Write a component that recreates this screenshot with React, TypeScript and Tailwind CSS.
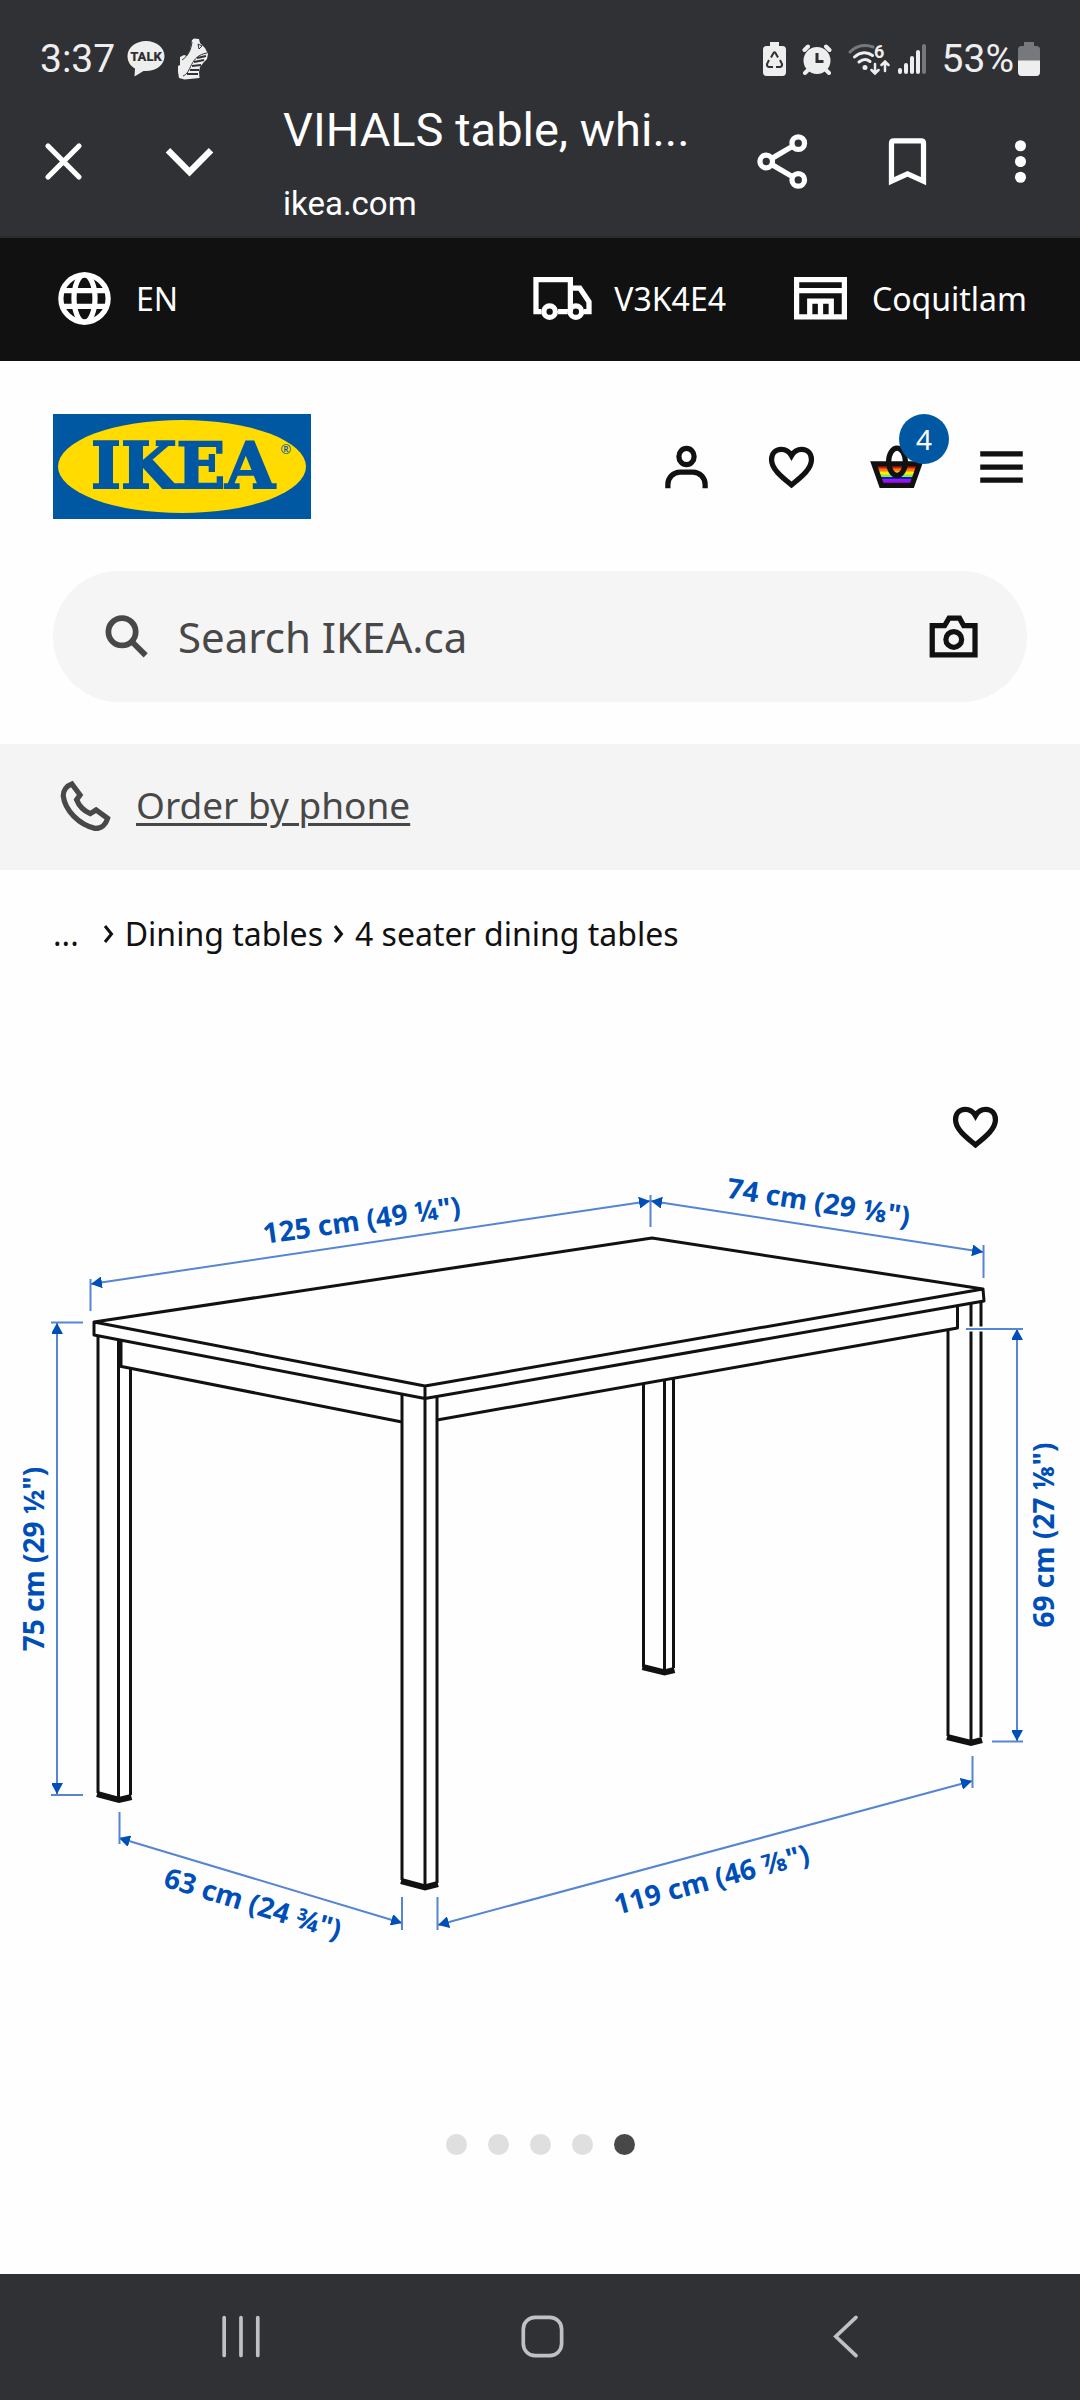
import React, { useState } from 'react';

type IconProps = {
  children: React.ReactNode;
  className?: string;
  strokeWidth?: number;
};

const Icon = ({ children, className = '', strokeWidth = 2 }: IconProps) => (
  <svg
    viewBox="0 0 24 24"
    fill="none"
    stroke="currentColor"
    strokeWidth={strokeWidth}
    className={`size-[63px] shrink-0 ${className}`}
    aria-hidden="true"
  >
    {children}
  </svg>
);

const HeartIcon = () => (
  <Icon>
    <path d="M12 19C9 16.5 4.4 13.2 4.4 9.4 4.4 7 6 5.5 8.1 5.5c1.7 0 3 .8 3.9 2.4.9-1.6 2.2-2.4 3.9-2.4 2.1 0 3.7 1.5 3.7 3.9C19.6 13.2 15 16.5 12 19Z" />
  </Icon>
);

const StatusBar = () => (
  <div className="flex items-center justify-between h-[54px] mt-8 px-10 text-[39px] text-[#eeeeee]">
    <div className="flex items-center gap-3">
      <span>3:37</span>
      <svg viewBox="0 0 38 38" className="size-[38px]" aria-hidden="true">
        <path
          fill="#eeeeee"
          d="M19 1C9 1 .5 7.500.5 16c0 5.500 3 10 7.500 12.500L7.500 36.500l9-5.500c11 1 21-5 21-15C37.500 7.500 29 1 19 1Z"
        />
        <text x="19" y="21" textAnchor="middle" fontSize="13" fontWeight="900" fill="#303135">
          TALK
        </text>
      </svg>
      <svg viewBox="0 0 32 42" className="h-[42px] w-8" aria-hidden="true">
        <path
          fill="#eeeeee"
          d="M15 2l2-1.500 5 .5 1 4 5 5 3 6-1 5-3 3-4 5-1 5 .5 6-15 1.500L2 40l-1-6V28l2-1V19l4-2 3 1 3-6Z"
        />
        <g fill="none" stroke="#303135" strokeWidth="1">
          <path d="M6 38c9-3 6-20 24-23M15 4c-1 8-4 14-10 18M21 6l4 2-3 3Z" />
          <path strokeWidth="2" d="M20 20l9-2M17 24l10-2M15 28l9-1M13 32l9 0M10 36l11 0" />
        </g>
      </svg>
    </div>
    <div className="flex items-center">
      <svg viewBox="0 0 23 34" className="h-[34px] w-[23px]" aria-hidden="true">
        <path fill="#eeeeee" d="M7 0h9v4h3.500q3.500 0 3.500 3.500V30q0 4-3.500 4h-16Q0 34 0 30V7.500Q0 4 3.500 4H7Z" />
        <g fill="none" stroke="#303135" strokeWidth="2">
          <path d="M8 15.500l2.500-4.500q1-1.500 2 0l2.500 4.500M17 18l2 4q.5 2.500-2 3h-4M10 25H6q-2.500-.5-2-3l2-4" />
        </g>
      </svg>
      <svg viewBox="0 0 30 31" className="ml-4 h-[31px] w-[30px]" aria-hidden="true">
        <g stroke="#eeeeee" strokeWidth="4" strokeLinecap="round">
          <path d="M2.500 6l3.500-3.500M27.500 6L24 2.500M6 26l-3 3M24 26l3 3" />
        </g>
        <circle cx="15" cy="16.500" r="13.500" fill="#eeeeee" />
        <path d="M15 9v8.500h6.500" fill="none" stroke="#303135" strokeWidth="3" />
      </svg>
      <svg viewBox="0 0 42 34" className="ml-4 h-[34px] w-[42px]" aria-hidden="true">
        <g fill="none" stroke="#eeeeee" strokeWidth="3" strokeLinecap="round">
          <path stroke="#77787b" d="M2 10C9 3 18 2 25 5" />
          <path d="M6.500 15c6-5.500 13-5.500 18-1.500M11 20c4-3 8-3 11-.5" />
          <path strokeWidth="2.500" d="M27 22v9m-3.500-3l3.500 3.500 3.500-3.500M37 29v-9.500m-3.500 3.500l3.500-3.500 3.500 3.500" />
        </g>
        <circle cx="17" cy="25.500" r="2.500" fill="#eeeeee" />
        <text x="26" y="16" fontSize="18" fontWeight="700" fill="#eeeeee">
          6
        </text>
      </svg>
      <svg viewBox="0 0 28 30" className="ml-2 h-[30px] w-7" aria-hidden="true">
        <g strokeWidth="4" strokeLinecap="round" stroke="#eeeeee">
          <path d="M2 26v2M8 21v7M14 14v14M20 8v20" />
          <path stroke="#77787b" d="M26 2v26" />
        </g>
      </svg>
      <span className="ml-4 mr-1">53%</span>
      <svg viewBox="0 0 22 34" className="h-[34px] w-[22px]" aria-hidden="true">
        <path fill="#77787b" d="M6 0h10v4h2.500Q22 4 22 7.500V19H0V7.500Q0 4 3.500 4H6Z" />
        <path fill="#eeeeee" d="M0 18.500h22V30q0 4-3.500 4h-15Q0 34 0 30Z" />
      </svg>
    </div>
  </div>
);

const BrowserBar = () => (
  <div className="flex items-center h-[150px] pl-8 pr-7">
    <button aria-label="Close">
      <Icon strokeWidth={2}>
        <path strokeLinecap="round" d="M6.100 6.100l11.800 11.800M17.900 6.100L6.100 17.900" />
      </Icon>
    </button>
    <button aria-label="Minimize" className="ml-[63px]">
      <Icon strokeWidth={2.400}>
        <path d="M3.800 7.700l8.200 8.300 8.200-8.300" />
      </Icon>
    </button>
    <div className="ml-[62px] min-w-0 flex-1 pt-3">
      <h1 className="truncate text-[47px] leading-[74px]">VIHALS table, whi...</h1>
      <p className="text-[33px] leading-[74px]">ikea.com</p>
    </div>
    <button aria-label="Share">
      <Icon>
        <circle cx="5.800" cy="12" r="2.400" />
        <circle cx="18" cy="5" r="2.400" />
        <circle cx="18" cy="19" r="2.400" />
        <path d="M7.800 10.900l8.200-4.800M7.800 13.100l8.200 4.800" />
      </Icon>
    </button>
    <button aria-label="Bookmark" className="ml-[62px]">
      <Icon>
        <path d="M5.900 19.500V5q0-.9.900-.9h10.400q.9 0 .9.900v14.500L12 16.700Z" />
      </Icon>
    </button>
    <button aria-label="More options" className="ml-[50px]">
      <Icon>
        <g fill="currentColor" stroke="none">
          <circle cx="12" cy="6" r="2.100" />
          <circle cx="12" cy="12" r="2.100" />
          <circle cx="12" cy="18" r="2.100" />
        </g>
      </Icon>
    </button>
  </div>
);

const TopBar = () => (
  <div className="flex items-center h-[123px] px-[53px] pb-0.5 bg-[#111111] text-white text-[32px]">
    <button className="flex items-center gap-[20px]">
      <Icon>
        <circle cx="12" cy="12" r="9" />
        <ellipse cx="12" cy="12" rx="4" ry="9" />
        <path d="M3.500 9h17M3.500 15h17" />
      </Icon>
      EN
    </button>
    <button className="ml-auto flex items-center gap-[20px]">
      <Icon>
        <path d="M4 17H1.900V4.800H15V17M10.300 17h3.700M15 8h3.600l3.500 5.300V17h-1.900" />
        <circle cx="7.100" cy="17" r="2.200" />
        <circle cx="17.100" cy="17" r="2.200" />
      </Icon>
      V3K4E4
    </button>
    <button className="ml-[63px] flex items-center gap-[20px]">
      <Icon>
        <path d="M2.900 4.800h18.200V19H2.900ZM3 9h18M7.900 19v-6h8.200v6M12 13v6" />
      </Icon>
      Coquitlam
    </button>
  </div>
);

const Logo = () => (
  <a href="#" aria-label="IKEA home" className="mr-auto">
    <svg viewBox="0 0 258 105" className="h-[105px] w-[258px]">
      <rect width="258" height="105" fill="#0058a3" />
      <ellipse cx="129" cy="52.500" rx="124" ry="46.500" fill="#ffdb00" />
      <text
        x="130"
        y="74"
        textAnchor="middle"
        fontFamily="DejaVu Serif, serif"
        fontWeight="700"
        fontSize="64"
        fill="#0058a3"
        stroke="#0058a3"
        strokeWidth="2"
      >
        IKEA
      </text>
      <text x="233" y="40" textAnchor="middle" fontSize="13" fill="#0058a3">
        ®
      </text>
    </svg>
  </a>
);

const Header = () => (
  <header className="flex items-center px-[53px] pt-[53px]">
    <Logo />
    <div className="flex items-center gap-[42px] -mr-1.5">
      <button aria-label="Account">
        <Icon>
          <ellipse cx="12" cy="8.200" rx="2.900" ry="3.100" />
          <path d="M4.900 20.300V19a4.700 4.700 0 0 1 4.700-4.900h4.800a4.700 4.700 0 0 1 4.700 4.900v1.300" />
        </Icon>
      </button>
      <button aria-label="Favourites">
        <HeartIcon />
      </button>
      <button aria-label="Shopping bag, 4 items" className="relative">
        <Icon>
          <g stroke="none">
            <path fill="#cc1a0c" d="M4.500 11.500h15v1.600h-15Z" />
            <path fill="#ff7a14" d="M5 12.800h14v1.300H5Z" />
            <path fill="#fff200" d="M5.500 13.900h13v1.300h-13Z" />
            <path fill="#7ff04a" d="M5.800 15h12.400v1.200H5.800Z" />
            <path fill="#1a12c8" d="M6 16h12v1H6Z" />
            <path fill="#9a10f0" d="M6.200 16.900h11.600v1.800H6.200Z" />
          </g>
          <path d="M3.400 11h17.400l-2.900 8.200H6.300Z" />
          <ellipse cx="12.200" cy="10.200" rx="3.200" ry="5.200" />
        </Icon>
        <span className="absolute -top-[21px] left-[34px] flex size-[50px] items-center justify-center rounded-full bg-[#0058a3] text-[28px] text-white">
          4
        </span>
      </button>
      <button aria-label="Menu">
        <Icon>
          <path d="M3.900 7.200h16.200M3.900 12.200h16.200M3.900 17.200h16.200" />
        </Icon>
      </button>
    </div>
  </header>
);

const SearchBar = () => {
  const [searchValue, setSearchValue] = useState('');

  return (
    <div className="mx-[53px] mt-[52px] flex items-center gap-[20px] h-[131px] px-[42px] rounded-full bg-[#f5f5f5]">
      <Icon className="text-[#484848]" strokeWidth={2.200}>
        <circle cx="10.300" cy="10.200" r="5.200" />
        <path d="M14 13.900l5.300 5.300" />
      </Icon>
      <input
        type="text"
        name="search"
        aria-label="Search IKEA.ca"
        placeholder="Search IKEA.ca"
        value={searchValue}
        onChange={(e) => setSearchValue(e.target.value)}
        className="min-w-0 flex-1 bg-transparent text-[42px] text-[#484848] placeholder:text-[#484848] placeholder:opacity-100 focus:outline-none"
      />
      <button aria-label="Search by image">
        <Icon>
          <path d="M3.900 19V7.900h4.700L10.300 5h4l1.600 2.900h4.300V19Z" />
          <circle cx="12.100" cy="13.100" r="3" />
        </Icon>
      </button>
    </div>
  );
};

const PhoneBanner = () => (
  <div className="mt-[42px] flex items-center gap-[20px] h-[126px] px-[53px] pb-1 bg-[#f4f4f4] text-[#484848]">
    <Icon>
      <path d="M7.200 3.800l3.100 4.200-1.300 1.800c.9 2.300 2.700 4.200 5.200 5.300l2.200-1.400 4.400 3.200c-.6 2.200-2.400 3.900-4.800 3.800C9.900 19.300 4.500 13.800 3.900 8.300c0-2.100 1.300-3.800 3.300-4.500Z" />
    </Icon>
    <a href="#" className="text-[37px] underline decoration-[3px] underline-offset-[4px]">
      Order by phone
    </a>
  </div>
);

const Chevron = () => (
  <svg viewBox="0 0 12 20" className="h-5 w-3" fill="none" stroke="#111111" strokeWidth="3" aria-hidden="true">
    <path d="M2 2l6.500 8L2 18" />
  </svg>
);

const Breadcrumb = () => (
  <nav aria-label="Breadcrumb" className="flex items-center h-[128px] px-[53px] text-[32px]">
    <a href="#" className="mr-6">...</a>
    <Chevron />
    <a href="#" className="mx-2.5">Dining tables</a>
    <Chevron />
    <a href="#" className="mx-2.5">4 seater dining tables</a>
  </nav>
);

// Dimension lines as x1, y1, x2, y2
const dimensions = [
  [91, 286, 650, 203],
  [651, 203, 983, 254],
  [57, 325, 57, 796],
  [1017, 331, 1017, 743],
  [119, 840, 402, 925],
  [438, 927, 972, 783],
];

const labels = [
  { text: '125 cm (49 ¼")', x: 363, y: 232, angle: -8 },
  { text: '74 cm (29 ⅛")', x: 817, y: 214, angle: 9 },
  { text: '75 cm (29 ½")', x: 44, y: 561, angle: -90 },
  { text: '69 cm (27 ⅛")', x: 1054, y: 537, angle: -90 },
  { text: '63 cm (24 ¾")', x: 250, y: 915, angle: 17 },
  { text: '119 cm (46 ⅞")', x: 714, y: 891, angle: -15 },
];

const TableDrawing = () => (
  <svg viewBox="0 0 1080 1102" className="w-full" role="img" aria-label="VIHALS table with measurements">
    <defs>
      <marker
        id="arrow"
        viewBox="0 0 10 10"
        refX="10"
        refY="5"
        markerWidth="11"
        markerHeight="11"
        markerUnits="userSpaceOnUse"
        orient="auto-start-reverse"
      >
        <path d="M0 -.5v11L10 5Z" fill="#004fb8" />
      </marker>
    </defs>
    <g fill="none" stroke="#111111" strokeWidth="3" strokeLinejoin="round">
      {/* table top */}
      <path d="M94 324L652 240 983 291 425 388ZM94 324v13l331 63.500L984 303l-1-12M425 388v12.500" />
      {/* left leg */}
      <path d="M98 338v457M118.500 342v457M130.500 370v427" />
      <path d="M120.500 343v25" strokeWidth="4" />
      <path d="M119 368l283 56" />
      {/* front leg */}
      <path d="M402 396v486M425 400v488M437 399v486" />
      <path d="M437 422l520.500-92v-22" />
      {/* back leg */}
      <path d="M643.500 386v283M664.500 382v290M673.500 381v289" />
      {/* right leg */}
      <path d="M948 332v406M971 306v436M981 304v435" />
    </g>
    <path d="M960 331h28" stroke="#ffffff" strokeWidth="5" />
    <g fill="none" stroke="#111111" strokeWidth="6">
      <path d="M97 796l22 6 12.500-3M401 883l24 6.500 13-3.500M642.500 669l22 5.500 10-2.500M947 739l24 6 11-3" />
    </g>
    <g stroke="#5585d3" strokeWidth="2">
      {dimensions.map(([x1, y1, x2, y2]) => (
        <line
          key={`${x1}-${y1}`}
          x1={x1}
          y1={y1}
          x2={x2}
          y2={y2}
          markerStart="url(#arrow)"
          markerEnd="url(#arrow)"
        />
      ))}
      <path d="M90.500 281v32M650.500 197v32M983.500 247v33M51 324.500h32M51 797h32M966 331h57M992 743.500h31M119.500 814v32M402 899v33M437.500 899v33M972.500 758v32" />
    </g>
    <g fontSize="28" fontWeight="700" fill="#004fb8" textAnchor="middle">
      {labels.map(({ text, x, y, angle }) => (
        <text key={text} transform={`translate(${x} ${y}) rotate(${angle})`}>
          {text}
        </text>
      ))}
    </g>
  </svg>
);

const ProductGallery = () => {
  const [active, setActive] = useState(4);

  return (
    <section className="relative">
      <TableDrawing />
      <button aria-label="Save to favourites" className="absolute top-[97px] right-[73px]">
        <HeartIcon />
      </button>
      <div className="flex justify-center gap-[21px] pt-[34px]">
        {[0, 1, 2, 3, 4].map((i) => (
          <button
            key={i}
            aria-label={`Image ${i + 1}`}
            onClick={() => setActive(i)}
            className={`size-[21px] rounded-full ${i === active ? 'bg-[#484848]' : 'bg-[#dfdfdf]'}`}
          />
        ))}
      </div>
    </section>
  );
};

const NavigationBar = () => (
  <div className="mt-auto flex items-center justify-between h-[126px] pl-[210px] pr-[203px] pb-0.5 bg-[#303135] text-[#c0c1c4]">
    <button aria-label="Recent apps">
      <Icon strokeWidth={1.400}>
        <path strokeLinecap="round" d="M5.400 4.800v14.400M11.800 4.800v14.400M18.200 4.800v14.400" />
      </Icon>
    </button>
    <button aria-label="Home">
      <Icon strokeWidth={1.400}>
        <rect x="4.300" y="4.700" width="14.600" height="14.600" rx="4.500" />
      </Icon>
    </button>
    <button aria-label="Back">
      <Icon strokeWidth={1.400}>
        <path strokeLinecap="round" d="M16 4.700L8.300 12l7.700 7.300" />
      </Icon>
    </button>
  </div>
);

const App = () => {
  return (
    <div className="flex min-h-screen flex-col bg-[#fefefe] font-['Noto_Sans',sans-serif] text-[#111111]">
      <div className="bg-[#303135] border-b-2 border-[#2b2b2e] text-white font-[Roboto,sans-serif]">
        <StatusBar />
        <BrowserBar />
      </div>
      <TopBar />
      <Header />
      <SearchBar />
      <PhoneBanner />
      <Breadcrumb />
      <ProductGallery />
      <NavigationBar />
    </div>
  );
};

export default App;
